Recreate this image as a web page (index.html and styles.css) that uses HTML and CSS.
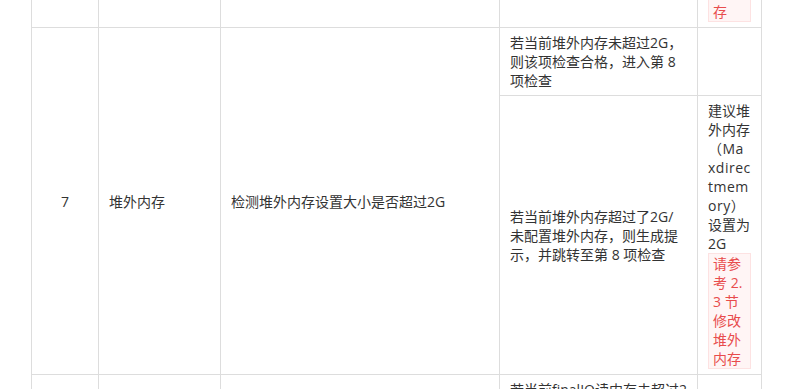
FILE: index.html
```html
<!DOCTYPE html>
<html lang="zh-CN">
<head>
<meta charset="utf-8">
<title>检查项</title>
<link rel="stylesheet" href="styles.css">
</head>
<body>
<div class="viewport">
  <table class="check-table">
    <colgroup>
      <col class="c-no"><col class="c-item"><col class="c-desc"><col class="c-result"><col class="c-advice">
    </colgroup>
    <tbody>
      <tr>
        <td class="num"></td>
        <td></td>
        <td></td>
        <td></td>
        <td><span class="tag">请参考 2.2 节修改堆内存</span></td>
      </tr>
      <tr>
        <td rowspan="2" class="num">7</td>
        <td rowspan="2">堆外内存</td>
        <td rowspan="2">检测堆外内存设置大小是否超过2G</td>
        <td>若当前堆外内存未超过2G，则该项检查合格，进入第 8 项检查</td>
        <td></td>
      </tr>
      <tr>
        <td>若当前堆外内存超过了2G/未配置堆外内存，则生成提示，并跳转至第 8 项检查</td>
        <td>建议堆外内存<span class="param">（Maxdirectmemory）</span>设置为2G<span class="tag">请参考 2.3 节修改堆外内存</span></td>
      </tr>
      <tr>
        <td rowspan="2" class="num"></td>
        <td rowspan="2"></td>
        <td rowspan="2"></td>
        <td>若当前finalIO读内存未超过2G，则该项检查合格，进入第 9 项检查</td>
        <td></td>
      </tr>
      <tr>
        <td></td>
        <td></td>
      </tr>
    </tbody>
  </table>
</div>
</body>
</html>
```

FILE: styles.css
```css
html, body {
  margin: 0;
  background: #fff;
}

body {
  font-family: "Open Sans", "Noto Sans CJK SC", sans-serif;
  font-size: 14px;
  line-height: 19px;
  color: #333;
  text-spacing-trim: space-all;
}

.viewport {
  height: 389px;
  overflow: hidden;
}

.check-table {
  border-collapse: collapse;
  table-layout: fixed;
  width: 730px;
  margin: -100px 0 0 31px;
}

.c-no { width: 67px; }
.c-item { width: 122px; }
.c-desc { width: 279px; }
.c-result { width: 198px; }
.c-advice { width: 64px; }

.check-table td {
  border: 1px solid #ddd;
  padding: 5px 10px;
  vertical-align: middle;
  word-break: break-all;
  height: 19px;
}

.check-table .num {
  text-align: center;
}

.param {
  letter-spacing: 0.5px;
}

.tag {
  display: block;
  color: #e84c4c;
  background: #fff5f5;
  border: 1px solid #fde2e2;
  padding: 0 4px;
}
```
